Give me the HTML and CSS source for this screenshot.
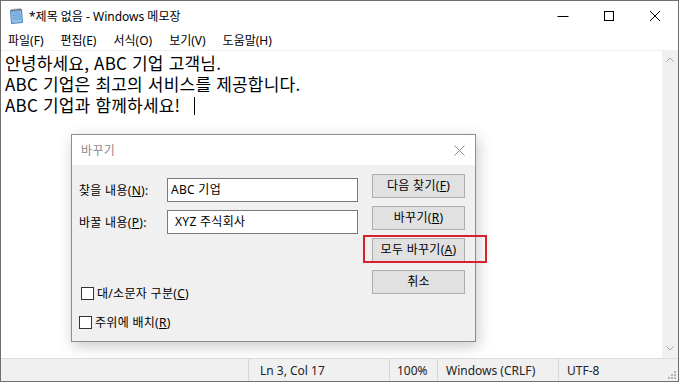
FILE: index.html
```html
<!DOCTYPE html>
<html lang="ko">
  <head>
    <meta charset="UTF-8" />
    <title>*제목 없음 - Windows 메모장</title>
    <link rel="stylesheet" href="styles.css">
  </head>
  <body>
    <div class="window">
      <header class="titlebar">
        <svg class="app-icon" width="16" height="17" viewBox="0 0 16 17">
          <path d="M2.5 3.5 L13.5 2.5 L14.5 15.5 L3.5 16.5 Z" fill="#8fc3ec" stroke="#4f82b8" />
          <path d="M4.5 6.5 L12.5 5.8 M4.7 8.5 L12.7 7.8 M4.9 10.5 L12.9 9.8 M5.1 12.5 L13.1 11.8" stroke="#5e95c8" stroke-width="0.8" />
          <path d="M4 2 v3 M6 1.8 v3 M8 1.6 v3 M10 1.4 v3 M12 1.2 v3" stroke="#666" stroke-width="0.9" />
        </svg>
        <span class="title">*제목 없음 - Windows 메모장</span>
        <div class="controls">
          <span class="ctl">
            <svg width="12" height="12" viewBox="0 0 12 12"><path d="M0.5 6.5 H11.5" stroke="#000" /></svg>
          </span>
          <span class="ctl">
            <svg width="12" height="12" viewBox="0 0 12 12"><rect x="1.5" y="1.5" width="9" height="9" fill="none" stroke="#000" /></svg>
          </span>
          <span class="ctl">
            <svg width="12" height="12" viewBox="0 0 12 12"><path d="M1 1 L11 11 M11 1 L1 11" stroke="#000" /></svg>
          </span>
        </div>
      </header>

      <nav class="menubar">
        <span>파일(F)</span>
        <span>편집(E)</span>
        <span>서식(O)</span>
        <span>보기(V)</span>
        <span>도움말(H)</span>
      </nav>

      <main class="editor">
        <div class="text">
          <p>안녕하세요, ABC 기업 고객님.</p>
          <p>ABC 기업은 최고의 서비스를 제공합니다.</p>
          <p>ABC 기업과 함께하세요! <span class="caret"></span></p>
        </div>
        <div class="scrollbar">
          <svg width="8" height="5" viewBox="0 0 8 5"><path d="M0.5 4.5 L4 1 L7.5 4.5" fill="none" stroke="#a3a3a3" /></svg>
          <svg width="8" height="5" viewBox="0 0 8 5"><path d="M0.5 0.5 L4 4 L7.5 0.5" fill="none" stroke="#a3a3a3" /></svg>
        </div>

        <div class="dialog">
          <div class="dlg-title">
            <span>바꾸기</span>
            <svg width="11" height="11" viewBox="0 0 11 11"><path d="M0.5 0.5 L10.5 10.5 M10.5 0.5 L0.5 10.5" stroke="#8c8c8c" /></svg>
          </div>
          <div class="dlg-body">
            <div class="dlg-left">
              <div class="field">
                <label>찾을 내용(<u>N</u>):</label>
                <div class="input">ABC 기업</div>
              </div>
              <div class="field">
                <label>바꿀 내용(<u>P</u>):</label>
                <div class="input pad">XYZ 주식회사</div>
              </div>
              <div class="checks">
                <div class="check first"><span class="box"></span>대/소문자 구분(<u>C</u>)</div>
                <div class="check"><span class="box"></span>주위에 배치(<u>R</u>)</div>
              </div>
            </div>
            <div class="dlg-buttons">
              <div class="btn">다음 찾기(<u>F</u>)</div>
              <div class="btn">바꾸기(<u>R</u>)</div>
              <div class="btn">모두 바꾸기(<u>A</u>)</div>
              <div class="btn">취소</div>
            </div>
          </div>
          <div class="highlight"></div>
        </div>
      </main>

      <footer class="statusbar">
        <span class="spacer"></span>
        <span class="cell pos">Ln 3, Col 17</span>
        <span class="cell zoom">100%</span>
        <span class="cell eol">Windows (CRLF)</span>
        <span class="cell enc">UTF-8</span>
        <svg class="grip" width="9" height="9" viewBox="0 0 9 9">
          <g fill="#b5b5b5">
            <rect x="6" y="0" width="2" height="2" />
            <rect x="3" y="3" width="2" height="2" />
            <rect x="6" y="3" width="2" height="2" />
            <rect x="0" y="6" width="2" height="2" />
            <rect x="3" y="6" width="2" height="2" />
            <rect x="6" y="6" width="2" height="2" />
          </g>
        </svg>
      </footer>
    </div>
  </body>
</html>
```

FILE: styles.css
```css
html,
body {
  margin: 0;
  height: 100%;
}
body {
  font-family: 'Noto Sans', 'Noto Sans CJK KR', sans-serif;
  font-size: 12px;
  color: #000;
  background: #fff;
}
p {
  margin: 0;
}

.window {
  height: 382px;
  box-sizing: border-box;
  border: 1px solid #6f6f6f;
  display: flex;
  flex-direction: column;
  overflow: hidden;
}

/* 제목 표시줄 */
.titlebar {
  height: 29px;
  display: flex;
  align-items: center;
  flex-shrink: 0;
}
.app-icon {
  margin: 0 5px 0 7px;
}
.title {
  flex: 1;
}
.controls {
  display: flex;
  align-self: stretch;
}
.ctl {
  width: 46px;
  display: flex;
  align-items: center;
  justify-content: center;
}

.menubar {
  height: 20px;
  display: flex;
  align-items: center;
  padding-left: 7px;
  flex-shrink: 0;
}
.menubar span {
  margin-right: 17px;
}

/* 편집 영역 */
.editor {
  position: relative;
  flex: 1;
  display: flex;
  border-top: 1px solid #f0f0f0;
}
.text {
  flex: 1;
  padding: 1px 0 0 4px;
  font-family: 'Noto Sans CJK KR', sans-serif;
  font-size: 17px;
  letter-spacing: 0.2px;
  line-height: 21px;
}
.caret {
  display: inline-block;
  width: 1px;
  height: 18px;
  background: #000;
  vertical-align: -3px;
  margin-left: 9px;
}
.scrollbar {
  width: 16px;
  background: #f0f0f0;
  display: flex;
  flex-direction: column;
  justify-content: space-between;
  align-items: center;
  padding: 6px 0 7px;
}

/* 바꾸기 대화상자 */
.dialog {
  position: absolute;
  left: 70px;
  top: 83px;
  width: 405px;
  height: 208px;
  box-sizing: border-box;
  border: 1px solid #8e8e8e;
  background: #f0f0f0;
  box-shadow: 2px 4px 14px rgba(0, 0, 0, 0.22);
  display: flex;
  flex-direction: column;
  letter-spacing: 0.3px;
}
.dlg-title {
  height: 30px;
  background: #fff;
  display: flex;
  align-items: center;
  justify-content: space-between;
  padding: 0 10px 0 9px;
  color: #8a8a8a;
}
.dlg-body {
  display: flex;
  gap: 13px;
  padding: 9px 10px 0 7px;
}
.dlg-left {
  flex: 1;
  padding-top: 4px;
}
.field {
  height: 24px;
  display: flex;
  align-items: center;
}
.field + .field {
  margin-top: 8px;
}
.field label {
  width: 88px;
}
.input {
  width: 191px;
  height: 24px;
  box-sizing: border-box;
  border: 1px solid #7a7a7a;
  background: #fff;
  padding-left: 3px;
  line-height: 22px;
}
.input.pad {
  padding-left: 7px;
}
.checks {
  margin-top: 50px;
  display: flex;
  flex-direction: column;
  gap: 11px;
}
.check {
  height: 18px;
  display: flex;
  align-items: center;
}
.check.first {
  margin-left: 2px;
}
.box {
  width: 11px;
  height: 11px;
  border: 1px solid #333;
  background: #fff;
  margin-right: 3px;
}
.dlg-buttons {
  width: 93px;
  display: flex;
  flex-direction: column;
  gap: 8px;
}
.btn {
  height: 24px;
  box-sizing: border-box;
  border: 1px solid #adadad;
  background: #e1e1e1;
  text-align: center;
  line-height: 22px;
}
.highlight {
  position: absolute;
  left: 291px;
  top: 100px;
  width: 124px;
  height: 28px;
  box-sizing: border-box;
  border: 2px solid #d7222b;
}

/* 상태 표시줄 */
.statusbar {
  height: 23px;
  box-sizing: border-box;
  border-top: 1px solid #dcdcdc;
  background: #f0f0f0;
  display: flex;
  align-items: center;
  color: #222;
  flex-shrink: 0;
  position: relative;
}
.spacer {
  flex: 1;
  align-self: stretch;
}
.cell {
  align-self: stretch;
  display: flex;
  align-items: center;
  box-sizing: border-box;
  border-left: 1px solid #d6d6d6;
}
.pos {
  width: 141px;
  padding-left: 11px;
}
.zoom {
  width: 48px;
  padding-left: 7px;
}
.eol {
  width: 121px;
  padding-left: 8px;
}
.enc {
  width: 120px;
  padding-left: 8px;
}
.grip {
  position: absolute;
  right: 1px;
  bottom: 1px;
}
```
